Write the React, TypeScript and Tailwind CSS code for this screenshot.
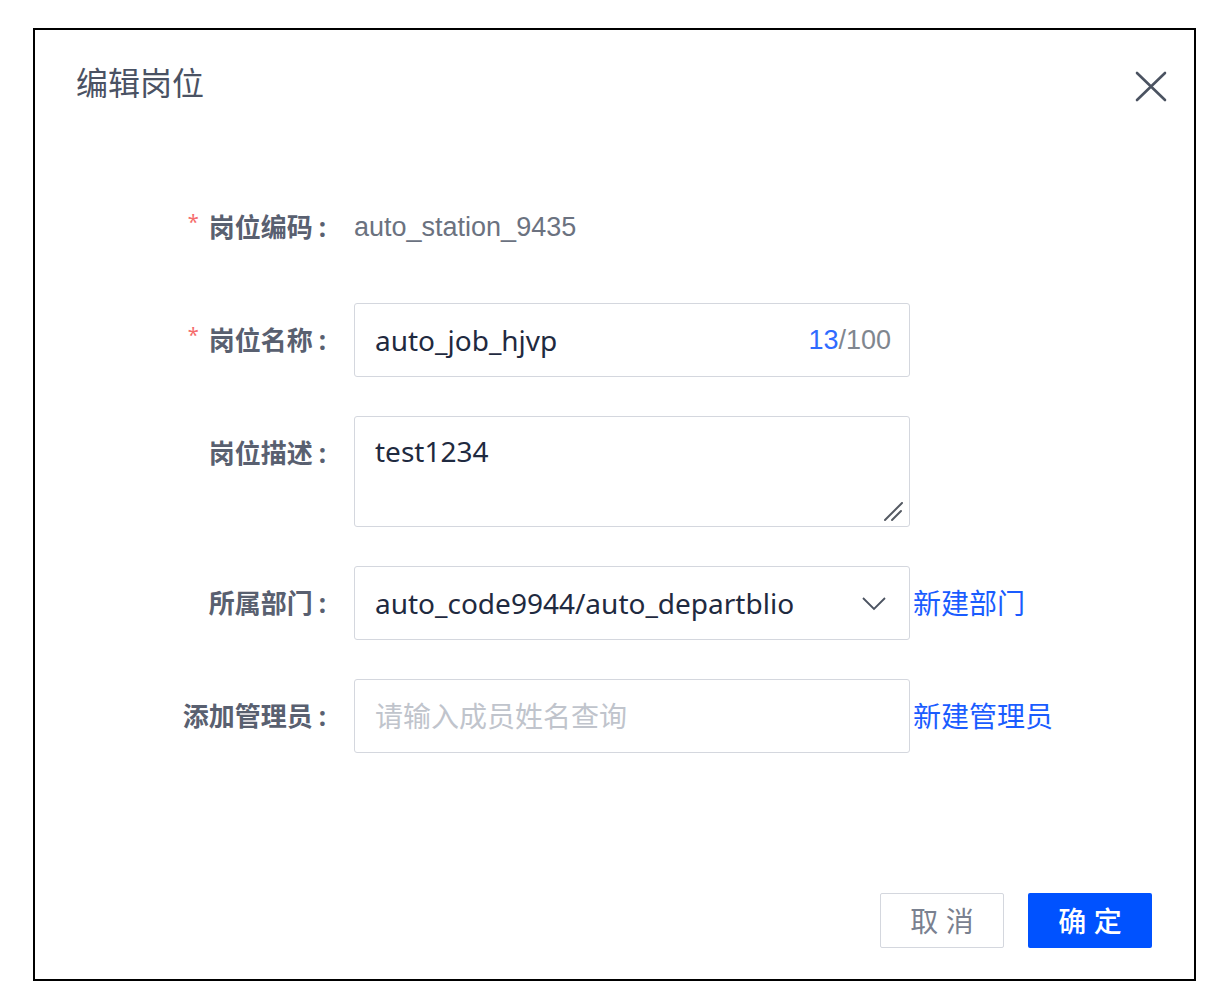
const cjk = { fontFamily: '"Noto Sans", "Noto Sans CJK SC", sans-serif' };

function Label({ text, required }: { text: string; required?: boolean }) {
  return (
    <div className="w-[291px] h-[74px] shrink-0 flex items-center justify-end">
      {required && (
        <span className="text-[#f56c6c] text-[20px] leading-none self-center -mt-[10px] mr-[10px]">*</span>
      )}
      <span className="text-[26px] font-bold text-[#596070]">
        {text}
        <span className="ml-[6px]">:</span>
      </span>
    </div>
  );
}

function ResizeGrip() {
  return (
    <svg className="absolute right-[5px] bottom-[4px]" width="20" height="20" viewBox="0 0 20 20">
      <line x1="1" y1="18" x2="18" y2="1" stroke="#555a63" strokeWidth="2" strokeLinecap="round" />
      <line x1="8" y1="18" x2="17" y2="9" stroke="#555a63" strokeWidth="2" strokeLinecap="round" />
    </svg>
  );
}

export default function App() {
  return (
    <div className="min-h-screen bg-white pt-[28px] pl-[33px]" style={cjk}>
      <div className="w-[1163px] h-[953px] border-2 border-black bg-white flex flex-col">
        {/* Header */}
        <div className="flex items-start justify-between pl-[41px] pr-[27px] pt-[33px]">
          <h2 className="text-[32px] leading-[40px] text-[#4a5263] font-normal">编辑岗位</h2>
          <button className="mt-[8px] text-[#4b5361]">
            <svg width="32" height="31" viewBox="0 0 32 31">
              <path d="M2 2 L30 29 M30 2 L2 29" stroke="currentColor" strokeWidth="2.6" strokeLinecap="round" />
            </svg>
          </button>
        </div>

        {/* Form */}
        <div className="mt-[87px] flex flex-col gap-[39px]">
          <div className="flex items-center">
            <Label text="岗位编码" required />
            <span
              className="ml-[28px] text-[27px] text-[#6b7280]"
              style={{ fontFamily: '"Liberation Sans", Arial, sans-serif' }}
            >
              auto_station_9435
            </span>
          </div>

          <div className="flex items-center">
            <Label text="岗位名称" required />
            <div className="ml-[28px] w-[556px] h-[74px] border border-[#d4d7de] rounded-[3px] flex items-center pl-[20px] pr-[18px]">
              <input
                readOnly
                value="auto_job_hjvp"
                className="flex-1 min-w-0 outline-none bg-transparent text-[28px] text-[#1f2a40]"
                style={cjk}
              />
              <span className="text-[27px]" style={{ fontFamily: '"Liberation Sans", Arial, sans-serif' }}>
                <span className="text-[#2f6bff]">13</span>
                <span className="text-[#80868f]">/100</span>
              </span>
            </div>
          </div>

          <div className="flex items-start">
            <Label text="岗位描述" />
            <div className="relative ml-[28px] w-[556px] h-[111px] border border-[#d4d7de] rounded-[3px] pl-[20px] pt-[16px]">
              <span className="block text-[28px] leading-[36px] text-[#1f2a40]">test1234</span>
              <ResizeGrip />
            </div>
          </div>

          <div className="flex items-center">
            <Label text="所属部门" />
            <div className="ml-[28px] w-[556px] h-[74px] border border-[#d4d7de] rounded-[3px] flex items-center justify-between pl-[20px] pr-[22px]">
              <span className="text-[28px] text-[#1f2a40]">auto_code9944/auto_departblio</span>
              <svg width="26" height="16" viewBox="0 0 26 16" className="mt-[2px]">
                <path d="M2 2 L13 13 L24 2" fill="none" stroke="#4b5361" strokeWidth="1.8" />
              </svg>
            </div>
            <a className="ml-[3px] text-[28px] text-[#1a5cff] cursor-pointer">新建部门</a>
          </div>

          <div className="flex items-center">
            <Label text="添加管理员" />
            <div className="ml-[28px] w-[556px] h-[74px] border border-[#d4d7de] rounded-[3px] flex items-center pl-[20px] pr-[20px]">
              <input
                placeholder="请输入成员姓名查询"
                className="w-full outline-none bg-transparent text-[28px] text-[#1f2a40] placeholder:text-[#c0c4cc]"
                style={cjk}
              />
            </div>
            <a className="ml-[3px] text-[28px] text-[#1a5cff] cursor-pointer">新建管理员</a>
          </div>
        </div>

        {/* Footer */}
        <div className="mt-auto flex justify-end gap-[24px] pr-[42px] pb-[31px]">
          <button className="w-[124px] h-[55px] border border-[#d4d7de] rounded-[2px] bg-white text-[28px] text-[#7a8190]">
            取 消
          </button>
          <button className="w-[124px] h-[55px] rounded-[2px] bg-[#0052ff] text-[28px] font-medium text-white">
            确 定
          </button>
        </div>
      </div>
    </div>
  );
}
